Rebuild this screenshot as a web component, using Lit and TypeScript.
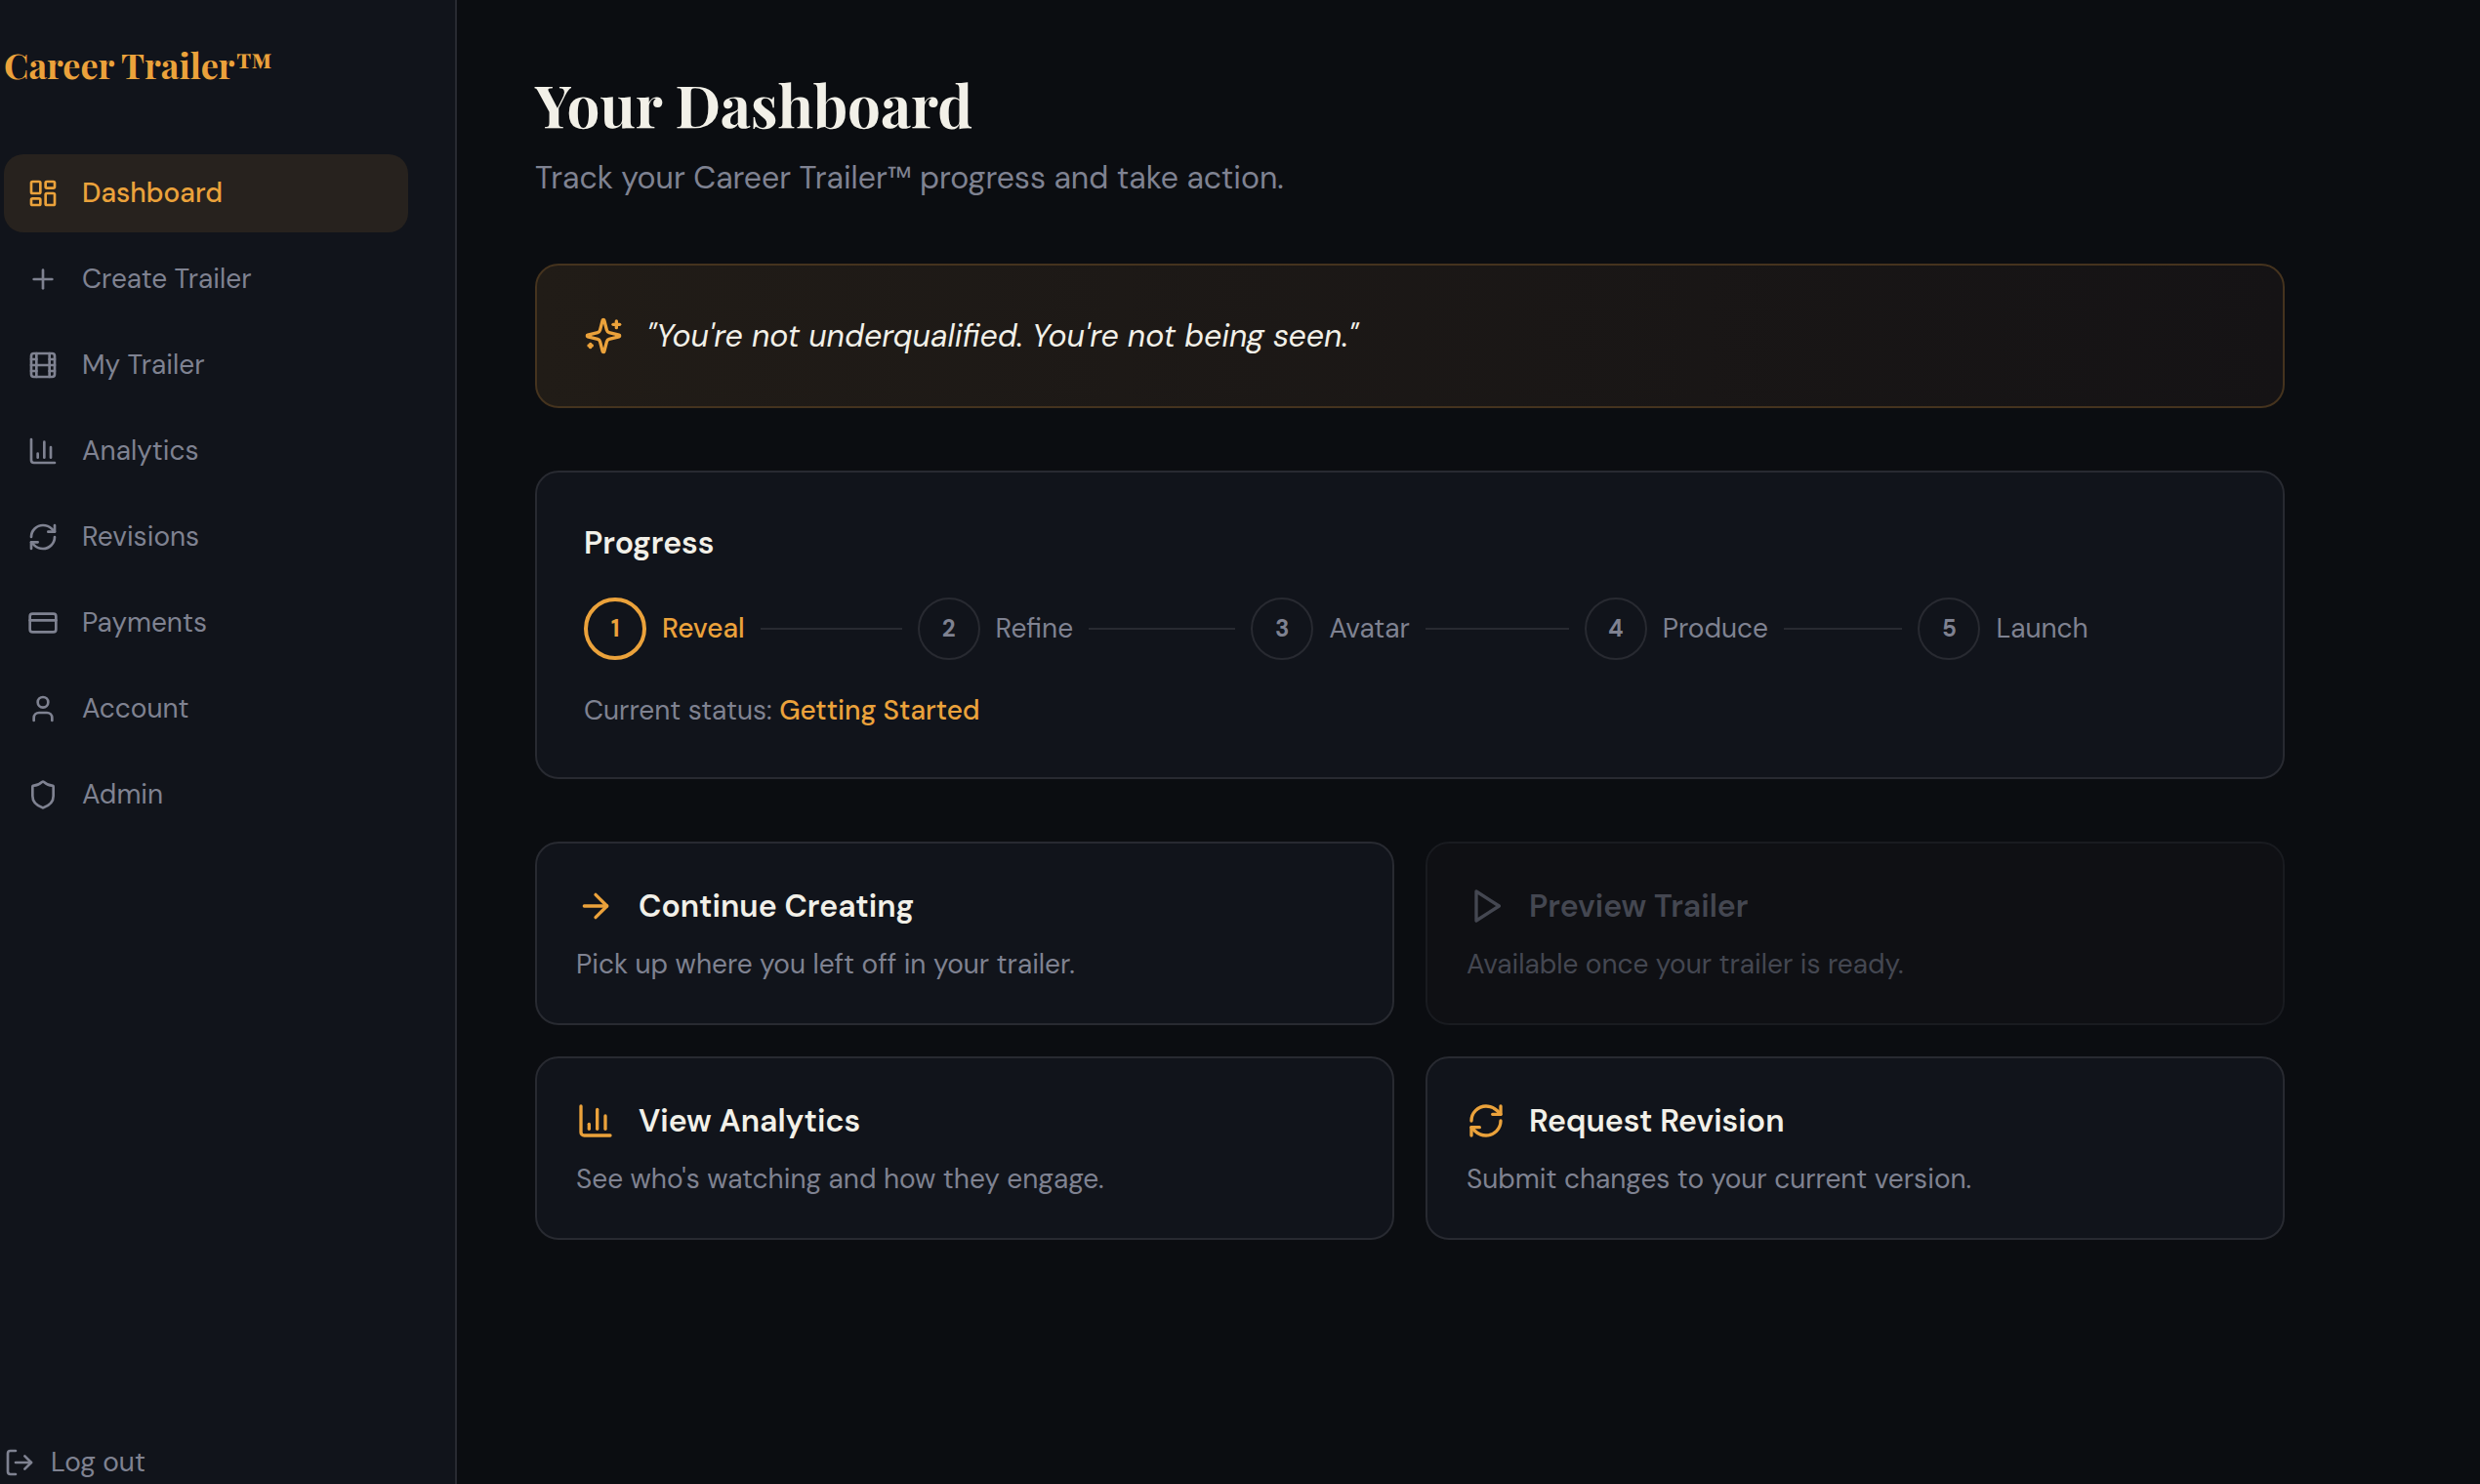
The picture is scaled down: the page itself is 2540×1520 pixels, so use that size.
import { LitElement, html, css, svg, nothing } from "lit";
import { customElement, property, state } from "lit/decorators.js";
import { classMap } from "lit/directives/class-map.js";

const icons: Record<string, unknown> = {
  dashboard: svg`<rect x="3" y="3" width="7" height="9" rx="1"/><rect x="14" y="3" width="7" height="5" rx="1"/><rect x="14" y="12" width="7" height="9" rx="1"/><rect x="3" y="16" width="7" height="5" rx="1"/>`,
  plus: svg`<path d="M5 12h14"/><path d="M12 5v14"/>`,
  film: svg`<rect x="3" y="3" width="18" height="18" rx="2"/><path d="M7 3v18"/><path d="M3 7.5h4"/><path d="M3 12h18"/><path d="M3 16.5h4"/><path d="M17 3v18"/><path d="M17 7.5h4"/><path d="M17 16.5h4"/>`,
  chart: svg`<path d="M3 3v16a2 2 0 0 0 2 2h16"/><path d="M18 17V9"/><path d="M13 17V5"/><path d="M8 17v-3"/>`,
  refresh: svg`<path d="M3 12a9 9 0 0 1 9-9 9.75 9.75 0 0 1 6.74 2.74L21 8"/><path d="M21 3v5h-5"/><path d="M21 12a9 9 0 0 1-9 9 9.75 9.75 0 0 1-6.74-2.74L3 16"/><path d="M8 16H3v5"/>`,
  card: svg`<rect x="2" y="5" width="20" height="14" rx="2"/><path d="M2 10h20"/>`,
  user: svg`<path d="M19 21v-2a4 4 0 0 0-4-4H9a4 4 0 0 0-4 4v2"/><circle cx="12" cy="7" r="4"/>`,
  shield: svg`<path d="M20 13c0 5-3.5 7.5-7.66 8.95a1 1 0 0 1-.67-.01C7.5 20.5 4 18 4 13V6a1 1 0 0 1 1-1c2 0 4.5-1.2 6.24-2.72a1.17 1.17 0 0 1 1.52 0C14.51 3.81 17 5 19 5a1 1 0 0 1 1 1z"/>`,
  logout: svg`<path d="M9 21H5a2 2 0 0 1-2-2V5a2 2 0 0 1 2-2h4"/><path d="m16 17 5-5-5-5"/><path d="M21 12H9"/>`,
  sparkles: svg`<path d="M9.937 15.5A2 2 0 0 0 8.5 14.063l-6.135-1.582a.5.5 0 0 1 0-.962L8.5 9.936A2 2 0 0 0 9.937 8.5l1.582-6.135a.5.5 0 0 1 .963 0L14.063 8.5A2 2 0 0 0 15.5 9.937l6.135 1.581a.5.5 0 0 1 0 .964L15.5 14.063a2 2 0 0 0-1.437 1.437l-1.582 6.135a.5.5 0 0 1-.963 0z"/><path d="M20 3v4"/><path d="M22 5h-4"/><path d="M4 17v2"/><path d="M5 18H3"/>`,
  arrow: svg`<path d="M5 12h14"/><path d="m12 5 7 7-7 7"/>`,
  play: svg`<polygon points="6 3 20 12 6 21 6 3"/>`,
};

@customElement("line-icon")
export class LineIcon extends LitElement {
  @property() name = "";

  static styles = css`
    :host {
      display: block;
      flex: none;
      width: 32px;
      height: 32px;
    }
    .glyph {
      display: block;
      width: 100%;
      height: 100%;
      fill: none;
      stroke: currentColor;
      stroke-width: 2;
      stroke-linecap: round;
      stroke-linejoin: round;
    }
  `;

  render() {
    return html`<svg class="glyph" viewBox="0 0 24 24" aria-hidden="true">${icons[this.name]}</svg>`;
  }
}

const navItems = [
  { icon: "dashboard", label: "Dashboard" },
  { icon: "plus", label: "Create Trailer" },
  { icon: "film", label: "My Trailer" },
  { icon: "chart", label: "Analytics" },
  { icon: "refresh", label: "Revisions" },
  { icon: "card", label: "Payments" },
  { icon: "user", label: "Account" },
  { icon: "shield", label: "Admin" },
];

const steps = ["Reveal", "Refine", "Avatar", "Produce", "Launch"];

const actions = [
  { icon: "arrow", title: "Continue Creating", text: "Pick up where you left off in your trailer.", ready: true },
  { icon: "play", title: "Preview Trailer", text: "Available once your trailer is ready.", ready: false },
  { icon: "chart", title: "View Analytics", text: "See who's watching and how they engage.", ready: true },
  { icon: "refresh", title: "Request Revision", text: "Submit changes to your current version.", ready: true },
];

@customElement("app-root")
export class AppRoot extends LitElement {
  @state() private page = "Dashboard";
  @state() private currentStep = 0;

  static styles = css`
    :host {
      --ink: #0b0d11;
      --panel: #11141b;
      --line: #282a31;
      --amber: #eba23b;
      --ivory: #f2f0e8;
      --muted: #7f8291;
      display: flex;
      min-height: 100vh;
      background: var(--ink);
      color: var(--ivory);
      font-family: "DM Sans", "Open Sans", "Noto Sans", sans-serif;
      font-size: 28px;
      line-height: 40px;
    }
    * {
      box-sizing: border-box;
    }
    h1, h2, h3, p, ul, ol {
      margin: 0;
      padding: 0;
      list-style: none;
    }
    .sidebar {
      display: flex;
      flex-direction: column;
      flex: none;
      width: 468px;
      height: 100vh;
      position: sticky;
      top: 0;
      padding: 38px 48px 2px 4px;
      border-right: 2px solid var(--line);
      background: var(--panel);
      color: var(--muted);
    }
    .brand {
      margin-bottom: 64px;
      color: var(--amber);
      font: bold 36px/56px "Playfair Display", "Liberation Serif", serif;
      text-decoration: none;
    }
    .nav {
      display: flex;
      flex-direction: column;
      gap: 8px;
      flex: 1;
    }
    .nav-link {
      display: flex;
      align-items: center;
      gap: 24px;
      padding: 20px 24px;
      border-radius: 20px;
      color: inherit;
      text-decoration: none;
    }
    .nav-link.active {
      background: #27221e;
      color: var(--amber);
      font-weight: 500;
    }
    .logout {
      display: flex;
      align-items: center;
      gap: 16px;
      padding: 0;
      border: 0;
      background: none;
      color: inherit;
      font: inherit;
      cursor: pointer;
    }
    .main {
      flex: 1;
      min-width: 0;
      padding: 70px 80px;
    }
    .content {
      display: flex;
      flex-direction: column;
      gap: 64px;
      max-width: 1792px;
    }
    .title {
      margin-bottom: 16px;
      font: bold 60px/72px "Playfair Display", "Liberation Serif", serif;
    }
    .subtitle {
      color: var(--muted);
      font-size: 32px;
      line-height: 48px;
    }
    .quote {
      display: flex;
      align-items: center;
      gap: 24px;
      padding: 48px;
      border: 2px solid #45331e;
      border-radius: 24px;
      background: linear-gradient(90deg, #211c17, #151315);
      font-size: 32px;
      line-height: 48px;
      font-style: italic;
    }
    .large {
      width: 40px;
      height: 40px;
      color: var(--amber);
    }
    .panel {
      border: 2px solid var(--line);
      border-radius: 24px;
      background: var(--panel);
    }
    .progress {
      display: flex;
      flex-direction: column;
      gap: 32px;
      padding: 48px;
    }
    .heading {
      font-size: 32px;
      line-height: 48px;
      font-weight: 600;
    }
    .steps {
      display: grid;
      grid-template-columns: repeat(5, 1fr);
      gap: 16px;
    }
    .step {
      display: flex;
      align-items: center;
      gap: 16px;
      color: var(--muted);
    }
    .step.current {
      color: var(--amber);
      font-weight: 500;
    }
    .step:not(:last-child)::after {
      content: "";
      flex: 1;
      height: 2px;
      background: var(--line);
    }
    .number {
      display: grid;
      place-items: center;
      flex: none;
      width: 64px;
      height: 64px;
      border: 2px solid var(--line);
      border-radius: 50%;
      font-size: 24px;
      font-weight: 700;
    }
    .step.current .number {
      border: 4px solid var(--amber);
    }
    .status {
      color: var(--muted);
    }
    .status-value {
      color: var(--amber);
      font-weight: 500;
    }
    .actions {
      display: grid;
      grid-template-columns: repeat(2, 1fr);
      gap: 32px;
    }
    .action {
      display: flex;
      flex-direction: column;
      gap: 16px;
      padding: 40px;
      color: var(--ivory);
      font: inherit;
      text-align: left;
      cursor: pointer;
    }
    .action-head {
      display: flex;
      align-items: center;
      gap: 24px;
    }
    .action-text {
      color: var(--muted);
    }
    .action:disabled {
      border-color: #191b20;
      background: #0f1014;
      color: #444751;
      cursor: default;
    }
    .action:disabled .large,
    .action:disabled .action-text {
      color: #444751;
    }
  `;

  private go(event: Event, label: string) {
    event.preventDefault();
    this.page = label;
  }

  render() {
    return html`
      <aside class="sidebar">
        <a class="brand" href="#">Career Trailer™</a>
        <nav class="nav" aria-label="Main">
          ${navItems.map(
            (item) => html`<a
              class=${classMap({ "nav-link": true, active: item.label === this.page })}
              href="#"
              aria-current=${item.label === this.page ? "page" : nothing}
              @click=${(e: Event) => this.go(e, item.label)}
              ><line-icon name=${item.icon}></line-icon><span>${item.label}</span></a
            >`
          )}
        </nav>
        <button class="logout" type="button"><line-icon name="logout"></line-icon><span>Log out</span></button>
      </aside>
      <main class="main">
        <div class="content">
          <header>
            <h1 class="title">Your Dashboard</h1>
            <p class="subtitle">Track your Career Trailer™ progress and take action.</p>
          </header>
          <section class="quote">
            <line-icon class="large" name="sparkles"></line-icon>
            <p>"You're not underqualified. You're not being seen."</p>
          </section>
          <section class="panel progress">
            <h2 class="heading">Progress</h2>
            <ol class="steps">
              ${steps.map(
                (label, i) => html`<li class=${classMap({ step: true, current: i === this.currentStep })}>
                  <span class="number">${i + 1}</span><span>${label}</span>
                </li>`
              )}
            </ol>
            <p class="status">Current status: <span class="status-value">Getting Started</span></p>
          </section>
          <section class="actions">
            ${actions.map(
              (a) => html`<button class="panel action" type="button" ?disabled=${!a.ready}>
                <span class="action-head"
                  ><line-icon class="large" name=${a.icon}></line-icon><span class="heading">${a.title}</span></span
                >
                <span class="action-text">${a.text}</span>
              </button>`
            )}
          </section>
        </div>
      </main>
    `;
  }
}
